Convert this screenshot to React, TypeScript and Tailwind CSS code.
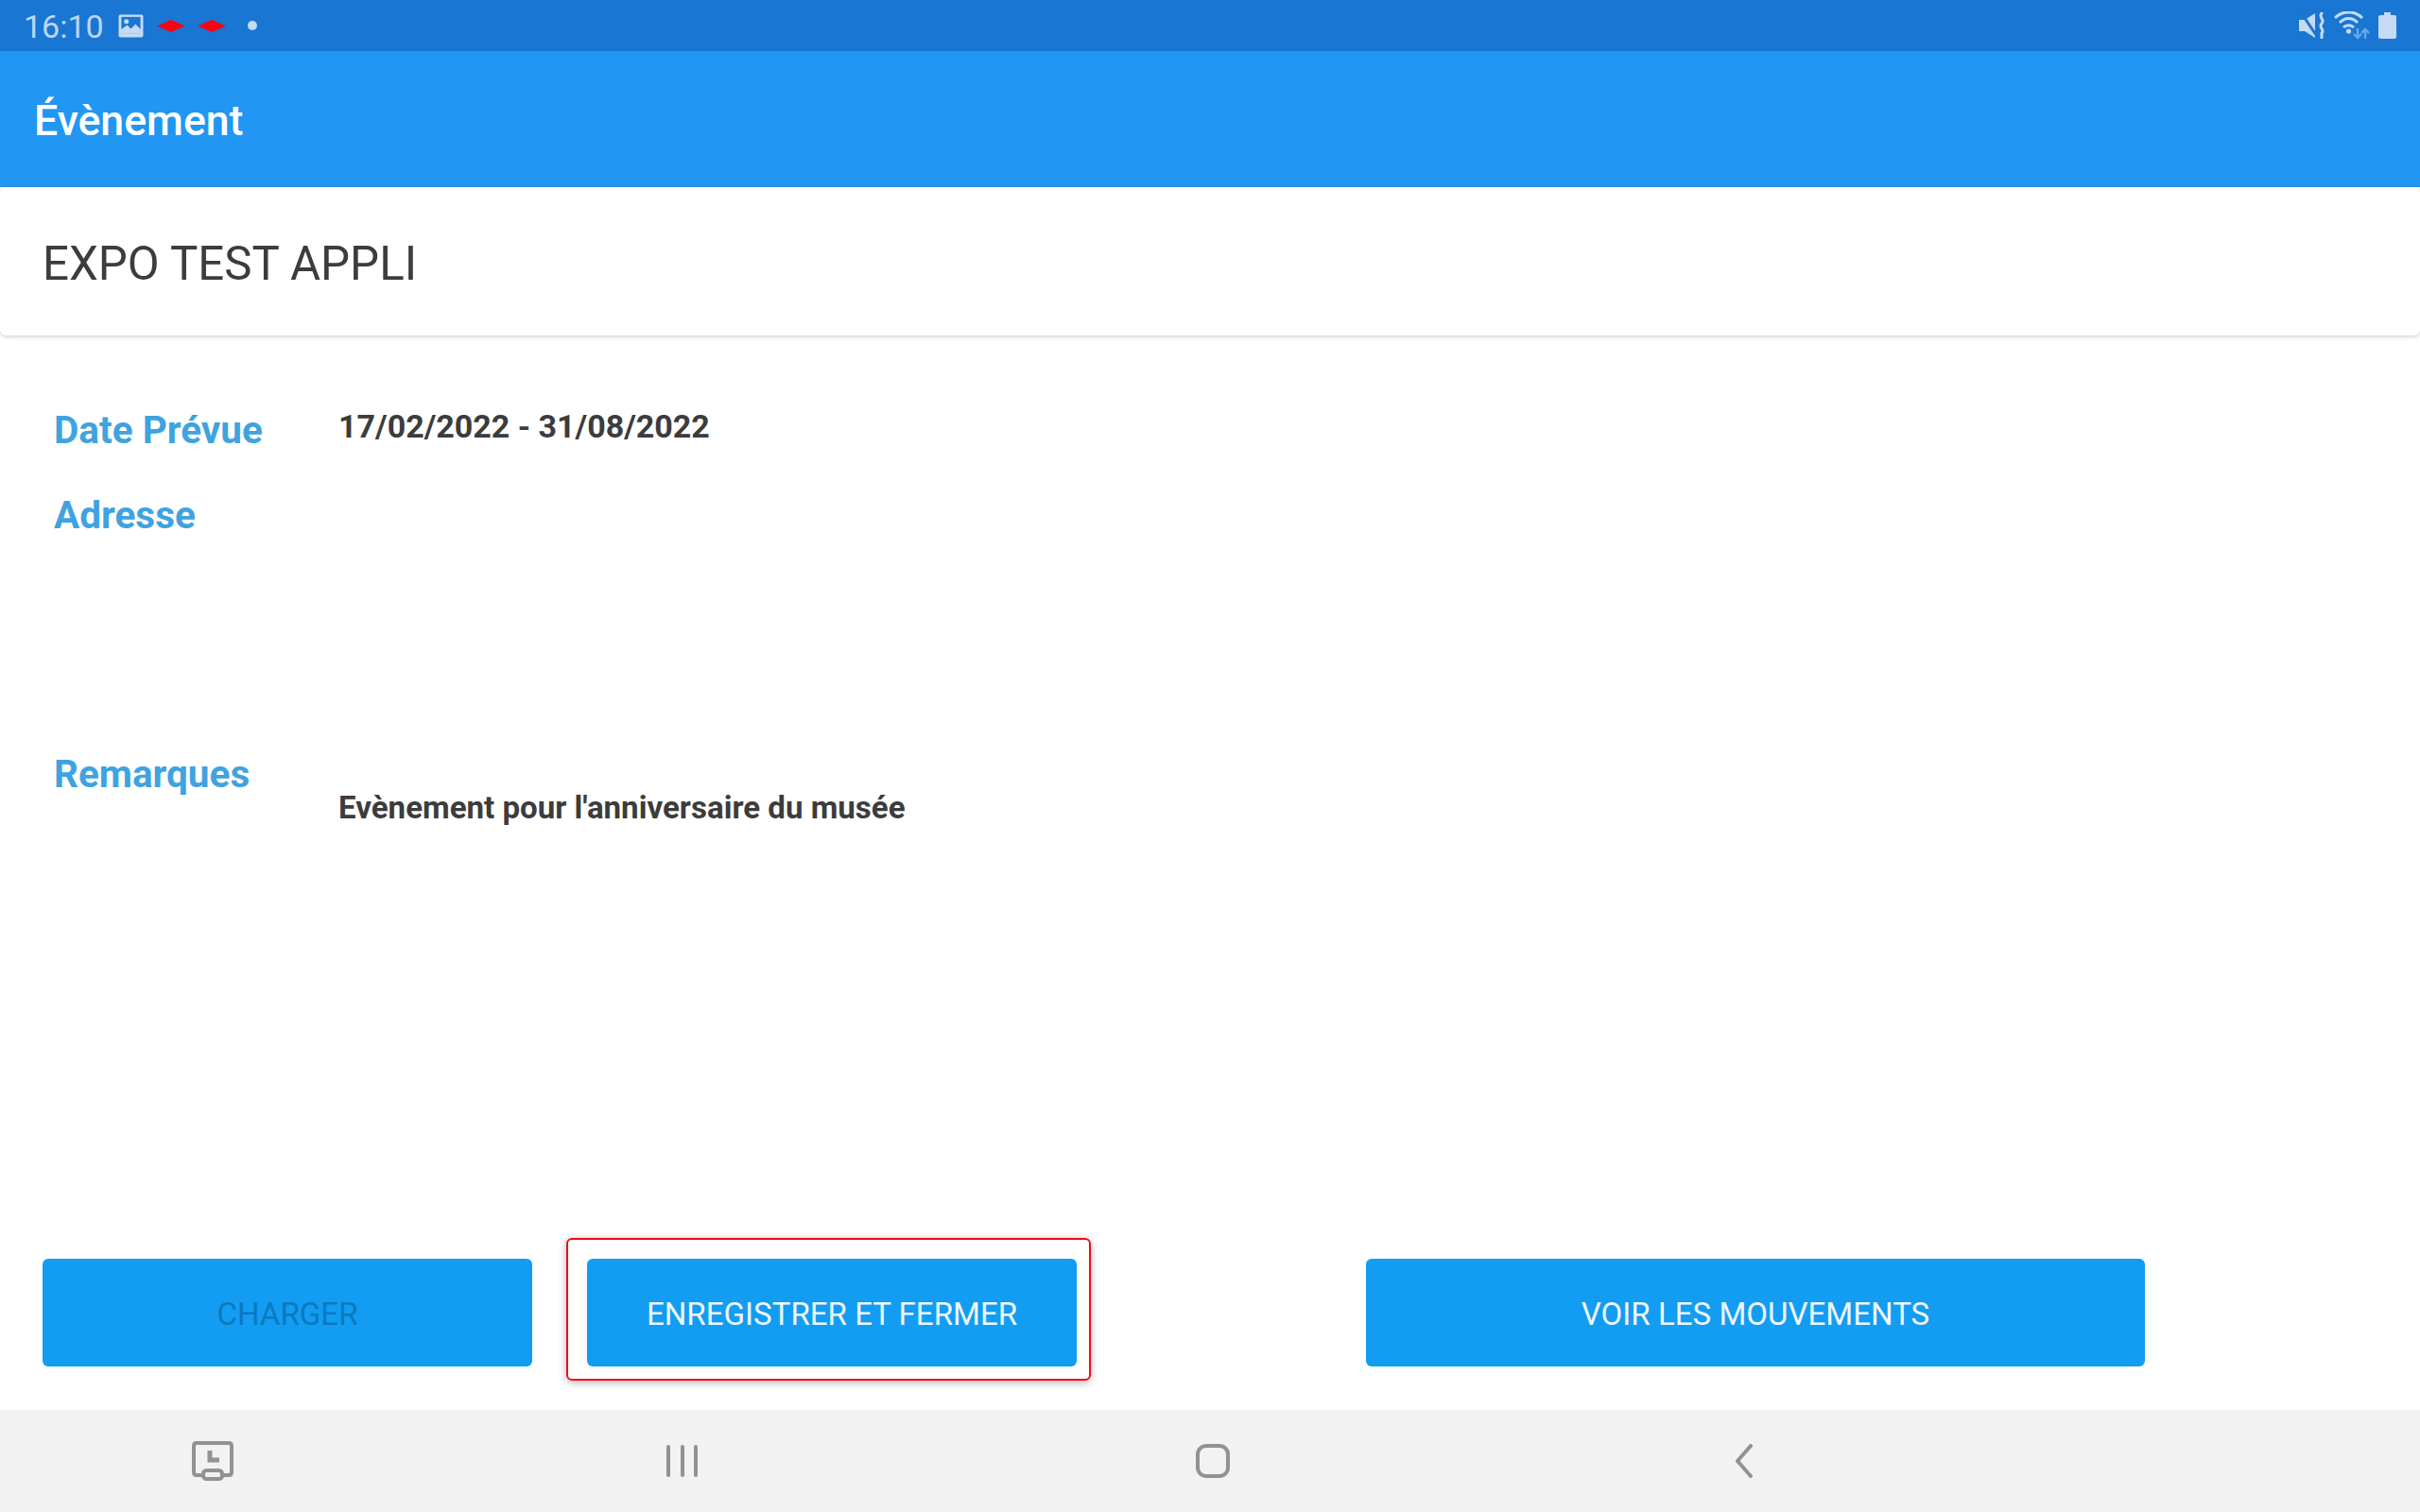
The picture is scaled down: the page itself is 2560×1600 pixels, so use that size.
import React from "react";

const Btn = ({ children, muted, w }: { children: React.ReactNode; muted?: boolean; w: string }) => (
  <button className={`${w} h-[114px] rounded-[6px] bg-[#129df2] text-[33.1px] leading-none flex items-center justify-center pt-[3px] ${muted ? "text-[#0a79bd]" : "text-[#eef7fd]"}`}>
    {children}
  </button>
);

export default function App() {
  return (
    <div className="w-[2560px] h-[1600px] flex flex-col bg-white text-[#3c3c3c] overflow-hidden" style={{ fontFamily: "Roboto, sans-serif" }}>
      <div className="h-[54px] shrink-0 bg-[#1976d2] flex items-center justify-between pl-[25px] pr-[25px]">
        <div className="flex items-center">
          <span className="text-[34px] leading-none text-[#bbd6f3] mt-[2px]">16:10</span>
          <svg className="ml-[15px]" width="27" height="25" viewBox="0 0 28 26">
            <rect width="27" height="25" x="0.5" y="0.5" rx="2" fill="#c5daf5" />
            <rect width="21" height="18" x="3.5" y="3" fill="#1976d2" />
            <circle cx="9" cy="8" r="2.6" fill="#c5daf5" />
            <path d="M3 21 L3 17 L10 12 L14 16 L19 11 L25 17 L25 21 Z" fill="#c5daf5" />
          </svg>
          <svg className="ml-[13px]" width="32" height="13" viewBox="0 0 32 14"><path d="M0 7 L16 0 L32 7 L16 14 Z" fill="#fb0210" /></svg>
          <svg className="ml-[11px]" width="32" height="13" viewBox="0 0 32 14"><path d="M0 7 L16 0 L32 7 L16 14 Z" fill="#fb0210" /></svg>
          <span className="ml-[22px] w-[10px] h-[10px] rounded-full bg-[#c5daf5]" />
        </div>
        <div className="flex items-center">
          <svg width="28" height="28" viewBox="0 0 28 28" fill="none">
            <path d="M0 8 H6 L17 1 V27 L6 20 H0 Z" fill="#c5daf5" />
            <path d="M2 0 L20 27" stroke="#1976d2" strokeWidth="3" />
            <path d="M24 1 C20 5 28 8 24 12 C20 16 28 19 24 22 L24 27" stroke="#c5daf5" strokeWidth="3" strokeLinecap="round" />
          </svg>
          <svg className="ml-[9px]" width="38" height="30" viewBox="0 0 38 30" fill="none">
            <path d="M1 7 C9 -1 22 -1 30 7" stroke="#c5daf5" strokeWidth="3" />
            <path d="M6 12 C12 6 19 6 25 12" stroke="#c5daf5" strokeWidth="3" />
            <path d="M10 17 C13 14 18 14 21 17" stroke="#c5daf5" strokeWidth="3" />
            <circle cx="15.5" cy="21" r="2.6" fill="#c5daf5" />
            <path d="M25 18 V27 M21 24 L25 28 L29 24" stroke="#6da8e6" strokeWidth="2.4" />
            <path d="M33 29 V20 M29 23 L33 19 L37 23" stroke="#6da8e6" strokeWidth="2.4" />
          </svg>
          <svg className="ml-[9px]" width="19" height="28" viewBox="0 0 19 28"><path d="M6 0 H13 V3 H17 Q19 3 19 5 V26 Q19 28 17 28 H2 Q0 28 0 26 V5 Q0 3 2 3 H6 Z" fill="#c5daf5" /></svg>
        </div>
      </div>

      <div className="h-[144px] shrink-0 bg-[#2196f3] flex items-center pl-[36px]">
        <h1 className="text-[44.6px] font-medium leading-none text-white mt-[4px]">Évènement</h1>
      </div>

      <div className="h-[157px] shrink-0 rounded-[6px] bg-white shadow-[0_1px_4px_rgba(0,0,0,0.22)] flex items-center pl-[45px]">
        <span className="text-[49.2px] leading-none mt-[6px]">EXPO TEST APPLI</span>
      </div>

      <div className="flex-1 flex flex-col pl-[57px] pt-[76px]">
        <div className="flex h-[48px] items-center">
          <span className="w-[301px] text-[40.5px] font-bold leading-none text-[#3fa3e0]">Date Prévue</span>
          <span className="text-[34px] font-bold leading-none -mt-[8px]">17/02/2022 - 31/08/2022</span>
        </div>
        <div className="flex h-[48px] items-center mt-[42px]">
          <span className="text-[40.5px] font-bold leading-none text-[#3fa3e0]">Adresse</span>
        </div>
        <div className="flex mt-[230px]">
          <span className="w-[301px] text-[40.5px] font-bold leading-none text-[#3fa3e0]">Remarques</span>
          <span className="text-[33.1px] font-bold leading-none mt-[39px]">Evènement pour l'anniversaire du musée</span>
        </div>
      </div>

      <div className="shrink-0 flex items-start pl-[45px] h-[182px]">
        <div className="mt-[22px]"><Btn muted w="w-[518px]">CHARGER</Btn></div>
        <div className="ml-[36px] rounded-[6px] border-2 border-[#ee0a1a] pl-[20px] pr-[13px] pt-[20px] pb-[13px] shadow-[0_2px_8px_rgba(0,0,0,0.3)]">
          <Btn w="w-[518px]">ENREGISTRER ET FERMER</Btn>
        </div>
        <div className="mt-[22px] ml-[291px]"><Btn w="w-[824px]">VOIR LES MOUVEMENTS</Btn></div>
      </div>

      <div className="h-[108px] shrink-0 bg-[#f2f2f2] flex items-center">
        <div className="w-[450px] flex justify-center">
          <svg width="46" height="42" viewBox="0 0 46 42" fill="none" stroke="#929292" strokeWidth="4">
            <path d="M15 36 H6 Q3 36 3 33 V5 Q3 2 6 2 H40 Q43 2 43 5 V33 Q43 36 40 36 H31" />
            <rect x="13" y="31" width="20" height="9" rx="3.5" />
            <path d="M20 10 V20 H30" strokeWidth="5" />
          </svg>
        </div>
        <div className="w-[542px] flex justify-center gap-[7px]">
          <span className="w-[4px] h-[34px] rounded-full bg-[#929292]" />
          <span className="w-[4px] h-[34px] rounded-full bg-[#929292] ml-[4px]" />
          <span className="w-[4px] h-[34px] rounded-full bg-[#929292] ml-[3px]" />
        </div>
        <div className="w-[582px] flex justify-center">
          <span className="w-[36px] h-[36px] rounded-[11px] border-[4px] border-[#929292]" />
        </div>
        <div className="w-[542px] flex justify-center">
          <svg width="20" height="36" viewBox="0 0 20 36" fill="none" stroke="#929292" strokeWidth="4" strokeLinecap="round" strokeLinejoin="round"><path d="M17 2 L3 18 L17 34" /></svg>
        </div>
      </div>
    </div>
  );
}
